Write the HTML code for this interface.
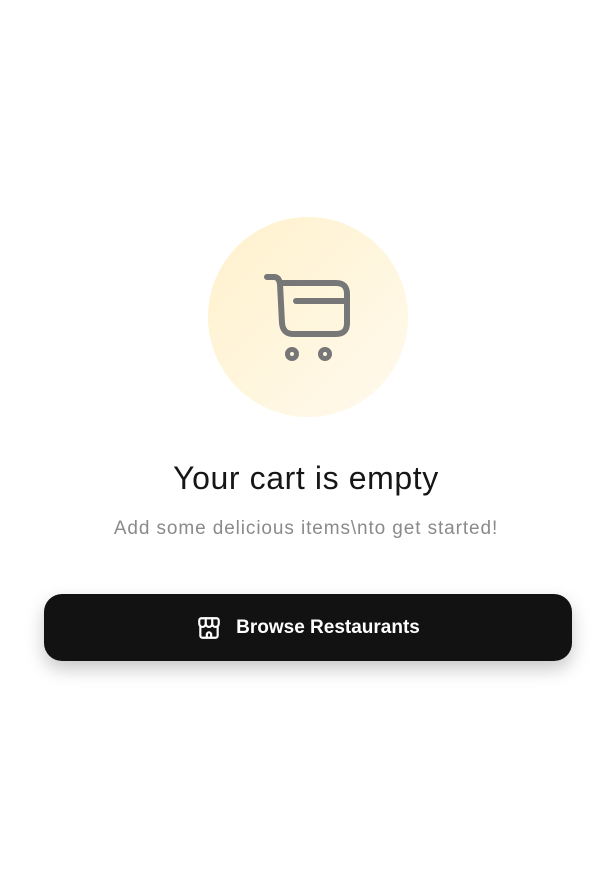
<!DOCTYPE html>
<html><head><style>
body{margin:0;width:612px;height:871px;background:#fff;font-family:"Liberation Sans",sans-serif;position:relative;overflow:hidden}
.c{position:absolute;left:208px;top:217px;width:200px;height:200px;border-radius:50%;background:linear-gradient(135deg,#fff1cc,#fffaee)}
h1{position:absolute;top:460px;left:0;width:612px;text-align:center;margin:0;font-size:32px;font-weight:500;color:#161616;letter-spacing:0.6px}
p{position:absolute;top:518px;left:0;width:612px;text-align:center;margin:0;font-size:19px;color:#8a8a8a;letter-spacing:0.9px}
.b{position:absolute;left:44px;top:594px;width:528px;height:67px;border-radius:18px;background:#121212;box-shadow:0 8px 18px rgba(0,0,0,.22);color:#fff;font-weight:bold;font-size:19px;display:flex;align-items:center;justify-content:center}
</style></head><body>
<div class="c"></div>
<svg style="position:absolute;left:0;top:0" width="612" height="871" fill="none" stroke="#777" stroke-width="6" stroke-linecap="round" stroke-linejoin="round">
<path d="M267 277 H274 Q279 277 280 284 L282 323 Q283 334 293 334 H336 Q347 334 347 323 V294 Q347 283 336 283 H280"/>
<path d="M296 301 H347"/>
<circle cx="292" cy="354" r="4.5" stroke-width="5"/>
<circle cx="325" cy="354" r="4.5" stroke-width="5"/>
</svg>
<h1>Your cart is empty</h1>
<p>Add some delicious items\nto get started!</p>
<div class="b"><svg width="26" height="26" viewBox="0 0 24 24" fill="none" stroke="#fff" stroke-width="2" stroke-linecap="round" stroke-linejoin="round" style="margin-right:14px"><path d="M5 3h14a2 2 0 0 1 2 2v3a3 3 0 0 1-6 0 3 3 0 0 1-6 0 3 3 0 0 1-6 0V5a2 2 0 0 1 2-2z"/><path d="M9 3v5M15 3v5"/><path d="M4 11v8a2 2 0 0 0 2 2h12a2 2 0 0 0 2-2v-8"/><path d="M10 21v-3a2 2 0 0 1 4 0v3"/></svg>Browse Restaurants</div>
</body></html>
